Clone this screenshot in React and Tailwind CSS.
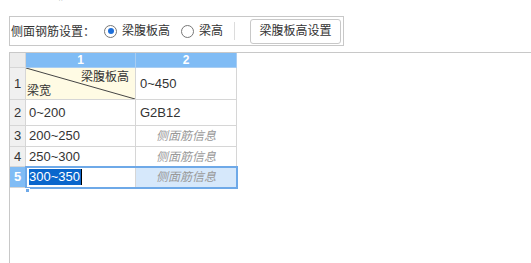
import React from "react";

const font = { fontFamily: '"Liberation Sans", "Noto Sans CJK SC", sans-serif' };

function Radio({ checked }) {
  return (
    <span className="w-[13px] h-[13px] rounded-full border border-[#777] bg-white flex items-center justify-center">
      {checked && <span className="w-[6px] h-[6px] rounded-full bg-[#1e6fd9]" />}
    </span>
  );
}

function RowHead({ n, active }) {
  return (
    <div
      className={
        "w-[16px] shrink-0 border-r border-b border-[#d6d6d6] flex items-center justify-center text-[13px] " +
        (active ? "bg-[#80bcf5] text-white font-bold" : "bg-[#f0f0f0] text-[#333]")
      }
    >
      {n}
    </div>
  );
}

function Hint() {
  return (
    <div className="w-[101px] shrink-0 border-r border-b border-[#d6d6d6] flex items-center justify-center text-[12px] italic text-[#999]">
      侧面筋信息
    </div>
  );
}

export default function App() {
  const rows = [
    { n: 3, a: "200~250", h: "h-[21px]" },
    { n: 4, a: "250~300", h: "h-[20px]" },
  ];

  return (
    <div className="w-[531px] h-[263px] overflow-hidden bg-white flex flex-col text-[#333]" style={font}>
      <div className="h-[16px] overflow-hidden shrink-0">
        <div className="pl-[9px] -mt-[12px] text-[12px] leading-[14px]">上级钢筋信息</div>
      </div>

      {/* group box */}
      <div className="ml-[9px] w-[335px] h-[30px] shrink-0 border border-[#c8c8c8] flex items-center text-[12px]">
        <span className="ml-[1px]" style={{ fontFamily: '"Noto Sans CJK SC", sans-serif' }}>侧面钢筋设置：</span>
        <div className="ml-[9px] flex items-center gap-[5px]">
          <Radio checked />
          <span>梁腹板高</span>
        </div>
        <div className="ml-[11px] flex items-center gap-[5px]">
          <Radio />
          <span>梁高</span>
        </div>
        <div className="ml-[11px] w-px h-[18px] bg-[#dcdcdc]" />
        <button className="ml-[15px] w-[91px] h-[25px] border border-[#c8c8c8] rounded-[3px] bg-white text-[12px] text-[#333]">
          梁腹板高设置
        </button>
      </div>

      {/* grid */}
      <div className="mt-[6px] ml-[9px] flex-1 border-t border-l border-[#c8c8c8] flex flex-col">
        <div className="flex h-[15px]">
          <div className="w-[16px] bg-[#ececec] border-r border-b border-[#d6d6d6]" />
          <div className="w-[110px] bg-[#80bcf5] border-r border-b border-[#a8cdf2] text-white font-bold text-[12px] leading-[14px] text-center">1</div>
          <div className="w-[101px] bg-[#80bcf5] border-r border-b border-[#a8cdf2] text-white font-bold text-[12px] leading-[14px] text-center">2</div>
        </div>

        <div className="flex h-[32px]">
          <RowHead n={1} />
          <div className="w-[110px] relative bg-[#fffbe4] border-r border-b border-[#d6d6d6] flex flex-col justify-between text-[12px] leading-[14px] px-[1px] pt-[2px] pb-[1px]">
            <svg className="absolute inset-0" width="109" height="31">
              <line x1="0" y1="0" x2="109" y2="31" stroke="#444" strokeWidth="1" />
            </svg>
            <span className="self-end relative pr-[5px]">梁腹板高</span>
            <span className="self-start relative">梁宽</span>
          </div>
          <div className="w-[101px] border-r border-b border-[#d6d6d6] flex items-center pl-[4px] text-[13px]">0~450</div>
        </div>

        <div className="flex h-[26px]">
          <RowHead n={2} />
          <div className="w-[110px] border-r border-b border-[#d6d6d6] flex items-center pl-[3px] text-[13px]">0~200</div>
          <div className="w-[101px] border-r border-b border-[#d6d6d6] flex items-center pl-[4px] text-[13px]">G2B12</div>
        </div>

        {rows.map((r) => (
          <div key={r.n} className={"flex " + r.h}>
            <RowHead n={r.n} />
            <div className="w-[110px] border-r border-b border-[#d6d6d6] flex items-center pl-[3px] text-[13px]">{r.a}</div>
            <Hint />
          </div>
        ))}

        <div className="flex h-[21px] relative">
          <RowHead n={5} active />
          <div className="w-[110px] border-r border-b border-[#d6d6d6] flex items-center pl-[3px] text-[13px]">
            <span className="bg-[#0a66cc] text-white leading-[16px] pr-[1px] border-r border-black">300~350</span>
          </div>
          <div className="w-[101px] bg-[#d6e8fb] border-r border-b border-[#d6d6d6] flex items-center justify-center text-[12px] italic text-[#999]">
            侧面筋信息
          </div>
          <div className="absolute left-[15px] top-[-1px] w-[213px] h-[23px] border-2 border-[#6ea9e8]" />
          <div className="absolute left-[15px] top-[21px] w-[5px] h-[5px] bg-[#6ea9e8] border border-white" />
        </div>
      </div>
    </div>
  );
}
